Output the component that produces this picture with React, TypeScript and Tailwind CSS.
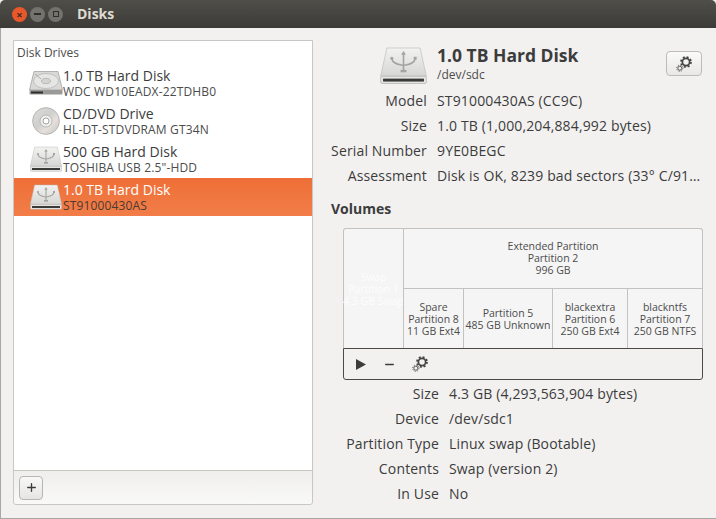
import { Minus, Plus } from 'lucide-react';

const FONT = "font-['Open_Sans','Noto_Sans',sans-serif]";

const DRIVES = [
  { id: 'wdc', kind: 'hdd', title: '1.0 TB Hard Disk', sub: 'WDC WD10EADX-22TDHB0' },
  { id: 'dvd', kind: 'cd', title: 'CD/DVD Drive', sub: 'HL-DT-STDVDRAM GT34N' },
  { id: 'toshiba', kind: 'usb', title: '500 GB Hard Disk', sub: 'TOSHIBA USB 2.5"-HDD' },
  { id: 'seagate', kind: 'usb', title: '1.0 TB Hard Disk', sub: 'ST91000430AS', selected: true },
];

const DISK_INFO = [
  { label: 'Model', value: 'ST91000430AS (CC9C)' },
  { label: 'Size', value: '1.0 TB (1,000,204,884,992 bytes)' },
  { label: 'Serial Number', value: '9YE0BEGC' },
  { label: 'Assessment', value: 'Disk is OK, 8239 bad sectors (33° C/91…' },
];

const VOLUME_INFO = [
  { label: 'Size', value: '4.3 GB (4,293,563,904 bytes)' },
  { label: 'Device', value: '/dev/sdc1' },
  { label: 'Partition Type', value: 'Linux swap (Bootable)' },
  { label: 'Contents', value: 'Swap (version 2)' },
  { label: 'In Use', value: 'No' },
];

function UsbDisk({ className }: { className: string }) {
  return (
    <svg viewBox="0 0 48 38" className={className}>
      <defs>
        <linearGradient id="usbTop" x1="0" y1="0" x2="0" y2="1">
          <stop offset="0" stopColor="#f2f2f1" />
          <stop offset="1" stopColor="#d6d6d4" />
        </linearGradient>
      </defs>
      <path d="M7 1 H41 L47.5 30 H0.5 Z" fill="url(#usbTop)" stroke="#bcbcba" strokeWidth="0.7" />
      <rect x="0.5" y="30" width="47" height="7.5" rx="1.5" fill="#e4e4e2" stroke="#a5a5a3" strokeWidth="0.6" />
      <rect x="3" y="32.5" width="42" height="3" fill="#3a3a38" />
      <g stroke="#a3a3a0" strokeWidth="1.6" fill="none">
        <path d="M24 6 V24" />
        <path d="M12 12 C13 18 20 18 24 19 C28 18 35 18 36 12" />
      </g>
      <path d="M24 4 L26.5 8 H21.5 Z" fill="#a3a3a0" />
      <rect x="21" y="23.5" width="6" height="2.5" fill="#a3a3a0" />
      <circle cx="12" cy="11.5" r="1.6" fill="#a3a3a0" />
      <rect x="34.5" y="10" width="3" height="3" fill="#a3a3a0" />
    </svg>
  );
}

function HddIcon({ className }: { className: string }) {
  return (
    <svg viewBox="0 0 34 24" className={className}>
      <path d="M5 0.5 H29 L33.5 19 H0.5 Z" fill="#d9d9d7" stroke="#9a9a98" strokeWidth="0.7" />
      <ellipse cx="17" cy="10" rx="12.5" ry="7.5" fill="#e6e6e4" stroke="#b2b2b0" strokeWidth="0.7" />
      <ellipse cx="17" cy="10" rx="4.5" ry="2.6" fill="#d4d4d2" stroke="#a2a2a0" strokeWidth="0.6" />
      <path d="M6 3 L12 8" stroke="#a8a8a6" strokeWidth="0.9" />
      <rect x="0.5" y="19" width="33" height="4.5" rx="1" fill="#9a9a98" />
      <rect x="2" y="20.5" width="12" height="2" fill="#2e2e2c" />
    </svg>
  );
}

function CdIcon({ className }: { className: string }) {
  return (
    <svg viewBox="0 0 28 28" className={className}>
      <defs>
        <linearGradient id="cdFace" x1="0" y1="0" x2="1" y2="1">
          <stop offset="0" stopColor="#dcdcda" />
          <stop offset="0.45" stopColor="#cfcfcd" />
          <stop offset="0.65" stopColor="#e6e0dc" />
          <stop offset="1" stopColor="#c4c4c2" />
        </linearGradient>
      </defs>
      <circle cx="14" cy="14" r="13.4" fill="url(#cdFace)" stroke="#a5a5a3" strokeWidth="0.7" />
      <circle cx="14" cy="14" r="6" fill="#efefee" stroke="#a5a5a3" strokeWidth="0.7" />
      <circle cx="14" cy="14" r="3" fill="#ffffff" stroke="#8f8f8d" strokeWidth="0.8" />
    </svg>
  );
}

function Gears({ className }: { className: string }) {
  return (
    <svg viewBox="0 0 16 16" className={className} fill="none">
      <circle cx="10" cy="6" r="3.6" stroke="#454542" strokeWidth="1.7" />
      <circle cx="10" cy="6" r="5" stroke="#454542" strokeWidth="1.7" strokeDasharray="2 1.93" />
      <circle cx="3.8" cy="12.2" r="2" stroke="#5c5c59" strokeWidth="1" />
      <circle cx="3.8" cy="12.2" r="3.1" stroke="#5c5c59" strokeWidth="1" strokeDasharray="1.2 1.23" />
    </svg>
  );
}

function DriveRow({ drive }: { drive: (typeof DRIVES)[number] }) {
  const icon =
    drive.kind === 'hdd' ? (
      <HddIcon className="w-[34px] h-[24px]" />
    ) : drive.kind === 'cd' ? (
      <CdIcon className="w-[28px] h-[28px]" />
    ) : (
      <UsbDisk className="w-[32px] h-[26px]" />
    );
  return (
    <div
      className={`flex items-center h-[38px] pl-[14px] ${
        drive.selected ? 'bg-gradient-to-b from-[#ee6f37] to-[#f27d48]' : ''
      }`}
    >
      <div className="w-[35px] flex justify-center shrink-0">{icon}</div>
      <div className="pb-[1px]">
        <div className={`text-[14px] leading-[19px] ${drive.selected ? 'text-white' : 'text-[#3c3c3c]'}`}>
          {drive.title}
        </div>
        <div
          className={`text-[12px] leading-[14px] tracking-[0.15px] ${
            drive.selected ? 'text-[#4a3a32]' : 'text-[#4c4c4c]'
          }`}
        >
          {drive.sub}
        </div>
      </div>
    </div>
  );
}

function InfoRow({ label, value, labelWidth }: { label: string; value: string; labelWidth: string }) {
  return (
    <div className="flex h-[25px] items-center text-[14px] tracking-[0.15px] text-[#3c3c3c] whitespace-nowrap">
      <div className={`${labelWidth} text-right shrink-0`}>{label}</div>
      <div className="ml-[10px]">{value}</div>
    </div>
  );
}

function Cell({ lines, className }: { lines: string[]; className: string }) {
  return (
    <div className={`flex flex-col items-center justify-center text-[10.5px] leading-[12px] whitespace-nowrap ${className}`}>
      {lines.map((line) => (
        <div key={line}>{line}</div>
      ))}
    </div>
  );
}

export default function App() {
  return (
    <div className={`${FONT} w-[716px] h-[519px] flex flex-col bg-[#f2f1f0] overflow-hidden`}>
      {/* Title bar */}
      <div className="h-[28px] shrink-0 flex items-center rounded-t-[5px] bg-gradient-to-b from-[#4f4e49] to-[#3c3b37] pl-[12px]">
        <div className="w-[15px] h-[15px] rounded-full bg-[#e8582a] flex items-center justify-center text-[#3c2a20] text-[11px] leading-none font-bold">
          ×
        </div>
        <div className="w-[15px] h-[15px] ml-[3px] rounded-full bg-[#73726c] flex items-center justify-center">
          <div className="w-[7px] h-[1.5px] bg-[#2f2e2b]" />
        </div>
        <div className="w-[15px] h-[15px] ml-[3px] rounded-full bg-[#73726c] flex items-center justify-center">
          <div className="w-[6px] h-[6px] border border-[#2f2e2b]" />
        </div>
        <div className="ml-[14px] pb-[2px] text-[14px] font-bold text-[#dfdbd2]">Disks</div>
      </div>

      {/* Window body */}
      <div className="flex-1 min-h-0 flex pl-[13px] pt-[12px] pb-[13px] border-l border-b border-[#a8a7a2]">
        {/* Drives list */}
        <div className="w-[300px] -ml-[1px] shrink-0 flex flex-col border border-[#c9c7c3] rounded-b-[3px]">
          <div className="flex-1 bg-white">
            <div className="text-[12px] leading-[16px] text-[#4c4c4c] pl-[3px] pt-[4px] pb-[3px]">Disk Drives</div>
            {DRIVES.map((drive) => (
              <DriveRow key={drive.id} drive={drive} />
            ))}
          </div>
          <div className="h-[34px] shrink-0 flex items-center pl-[5px] border-t border-[#c9c7c3] bg-gradient-to-b from-[#efeeec] to-[#f9f9f8] rounded-b-[3px]">
            <button className="w-[24px] h-[24px] flex items-center justify-center rounded-[4px] border border-[#b8b6b2] bg-gradient-to-b from-[#f8f8f7] to-[#e6e5e3]">
              <Plus className="w-[13px] h-[13px] text-[#3c3c3c]" strokeWidth={2.5} />
            </button>
          </div>
        </div>

        {/* Drive details */}
        <div className="flex-1 min-w-0 pl-[18px] pr-[13px] flex flex-col">
          <div className="h-[47px] shrink-0 flex relative">
            <div className="w-[96px] shrink-0 flex justify-end pt-[7px]">
              <UsbDisk className="w-[47px] h-[37px]" />
            </div>
            <div className="ml-[10px] pt-[3px]">
              <div className="text-[17.5px] leading-[24px] font-bold text-[#3c3c3c]">1.0 TB Hard Disk</div>
              <div className="mt-[1px] text-[12px] leading-[14px] text-[#4c4c4c]">/dev/sdc</div>
            </div>
            <button className="absolute right-[1px] top-[11px] w-[36px] h-[25px] flex items-center justify-center rounded-[4px] border border-[#bdbbb7] bg-gradient-to-b from-[#fafaf9] to-[#e9e8e6]">
              <Gears className="w-[16px] h-[16px]" />
            </button>
          </div>
          <div className="mt-[1px]">
            {DISK_INFO.map((row) => (
              <InfoRow key={row.label} label={row.label} value={row.value} labelWidth="w-[96px]" />
            ))}
          </div>
          <div className="mt-[11px] text-[14px] leading-[20px] font-bold text-[#3c3c3c]">Volumes</div>

          {/* Partition map */}
          <div className="mt-[9px] ml-[12px] h-[152px] shrink-0 flex flex-col">
            <div className="h-[120px] shrink-0 flex text-[#4c4c4c] bg-[#f5f5f5] border border-b-0 border-[#c4c2be] rounded-t-[3px]">
              <Cell lines={['Swap', 'Partition 1', '4.3 GB Swap']} className="w-[59px] shrink-0 text-[#fdfdfd] text-[10.2px]" />
              <div className="flex-1 flex flex-col border-l border-[#c4c2be]">
                <Cell lines={['Extended Partition', 'Partition 2', '996 GB']} className="h-[60px] shrink-0 pb-[1px] border-b border-[#c4c2be]" />
                <div className="flex-1 flex">
                  <Cell lines={['Spare', 'Partition 8', '11 GB Ext4']} className="w-[60px] border-r border-[#c4c2be]" />
                  <Cell lines={['Partition 5', '485 GB Unknown']} className="w-[89px] border-r border-[#c4c2be]" />
                  <Cell lines={['blackextra', 'Partition 6', '250 GB Ext4']} className="w-[75px] border-r border-[#c4c2be]" />
                  <Cell lines={['blackntfs', 'Partition 7', '250 GB NTFS']} className="flex-1" />
                </div>
              </div>
            </div>
            <div className="flex-1 flex items-center border border-[#4a4a48] rounded-b-[3px] bg-[#f2f1f0] pl-[12px]">
              <svg viewBox="0 0 10 11" className="w-[10px] h-[11px]">
                <path d="M0 0 L10 5.5 L0 11 Z" fill="#3c3c3c" />
              </svg>
              <Minus className="w-[13px] h-[13px] ml-[17px] text-[#3c3c3c]" strokeWidth={2.5} />
              <Gears className="w-[16px] h-[16px] ml-[16px] -mt-[1px]" />
            </div>
          </div>

          <div className="mt-[1px] ml-[1px] shrink-0">
            {VOLUME_INFO.map((row) => (
              <InfoRow key={row.label} label={row.label} value={row.value} labelWidth="w-[107px]" />
            ))}
          </div>
        </div>
      </div>
    </div>
  );
}
